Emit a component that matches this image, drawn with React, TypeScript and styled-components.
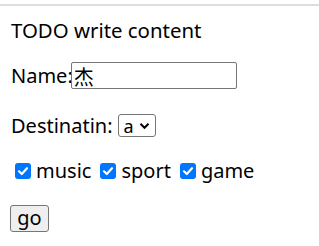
import React, { FC } from "react";
import styled, { createGlobalStyle } from "styled-components";

const GlobalStyle = createGlobalStyle`
  html, body {
    margin: 0;
    padding: 0;
    background: #fff;
  }
  body {
    font-family: "Noto Sans", "Noto Sans CJK SC", sans-serif;
    font-size: 20px;
    color: #000;
  }
`;

const TopRule = styled.div`
  height: 2px;
  margin-top: 4px;
  background: #dddddd;
`;

const Form = styled.form`
  display: flex;
  flex-direction: column;
  padding-left: 11px;
`;

const Row = styled.div<{ $top: number; $height: number }>`
  display: flex;
  align-items: center;
  margin-top: ${(p) => p.$top}px;
  height: ${(p) => p.$height}px;
  line-height: 1;
  white-space: nowrap;
`;

const Title = styled.span`
  font-size: 20.4px;
`;

const TextInput = styled.input`
  box-sizing: border-box;
  width: 166px;
  height: 27px;
  margin: 0 0 0 -2px;
  padding: 1px 2px 0;
  border: 1px solid #767676;
  border-radius: 2px;
  font-family: "Noto Sans CJK SC", sans-serif;
  font-size: 20px;
  color: #000;
  outline: none;
`;

const SelectBox = styled.div`
  box-sizing: border-box;
  display: flex;
  align-items: center;
  gap: 5px;
  width: 38px;
  height: 23px;
  margin-left: 5px;
  padding-left: 5px;
  border: 1px solid #767676;
  border-radius: 3px;
  font-size: 18px;
`;

const CheckItem = styled.label`
  display: flex;
  align-items: center;
  margin-right: 5px;
`;

const Box = styled.span`
  box-sizing: border-box;
  display: flex;
  align-items: center;
  justify-content: center;
  width: 16px;
  height: 16px;
  margin: 0 5px 0 4px;
  border-radius: 3px;
  background: #0075ff;
`;

const GoButton = styled.button`
  box-sizing: border-box;
  width: 39px;
  height: 27px;
  margin: 0 0 0 -1px;
  padding: 0 0 2px;
  border: 1px solid #767676;
  border-radius: 3px;
  background: #efefef;
  font-family: "Noto Sans", sans-serif;
  font-size: 20px;
  color: #000;
  line-height: 1;
`;

const Check: FC<{ label: string }> = ({ label }) => (
  <CheckItem>
    <Box>
      <svg width="12" height="12" viewBox="0 0 12 12">
        <path
          d="M2 6.3 L4.8 9 L10 3.2"
          fill="none"
          stroke="#fff"
          strokeWidth="2.2"
          strokeLinecap="round"
          strokeLinejoin="round"
        />
      </svg>
    </Box>
    {label}
  </CheckItem>
);

const App: FC = () => (
  <>
    <GlobalStyle />
    <TopRule />
    <Form onSubmit={(e) => e.preventDefault()}>
      <Row $top={10} $height={28}>
        <Title>TODO write content</Title>
      </Row>
      <Row $top={18} $height={27}>
        Name:
        <TextInput defaultValue="杰" />
      </Row>
      <Row $top={23} $height={27}>
        Destinatin:
        <SelectBox>
          a
          <svg width="11" height="8" viewBox="0 0 11 8">
            <path
              d="M1.5 1.8 L5.5 5.8 L9.5 1.8"
              fill="none"
              stroke="#000"
              strokeWidth="2"
            />
          </svg>
        </SelectBox>
      </Row>
      <Row $top={19} $height={26}>
        <Check label="music" />
        <Check label="sport" />
        <Check label="game" />
      </Row>
      <Row $top={21} $height={27}>
        <GoButton type="submit">go</GoButton>
      </Row>
    </Form>
  </>
);

export default App;
